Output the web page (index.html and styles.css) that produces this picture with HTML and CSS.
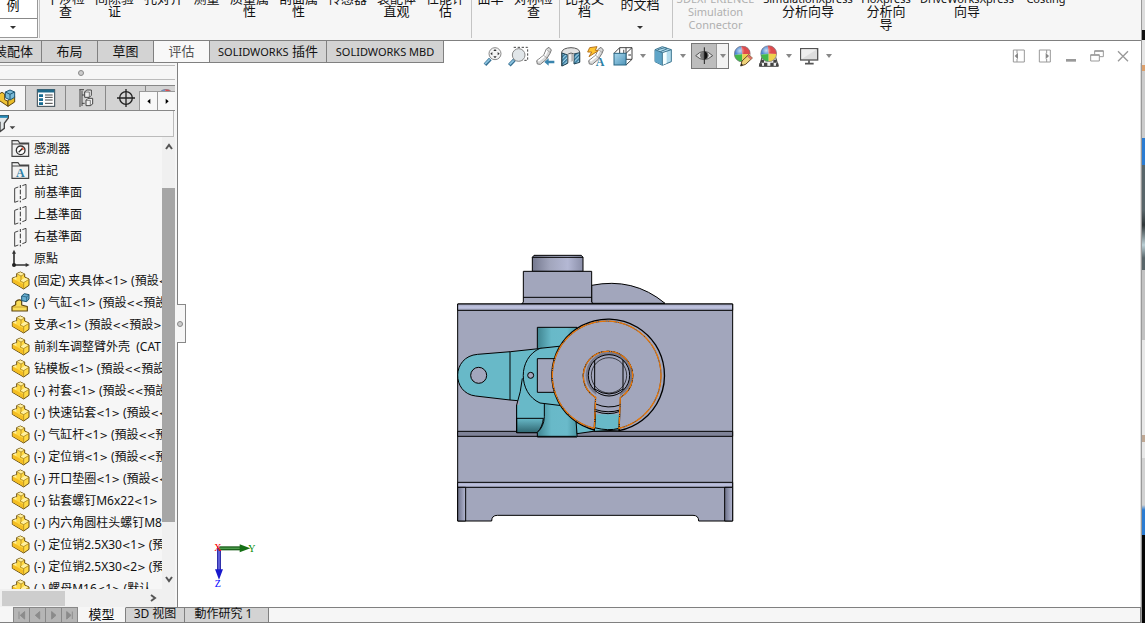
FILE: index.html
```html
<!DOCTYPE html>
<html lang="zh">
<head>
<meta charset="utf-8">
<title>SOLIDWORKS</title>
<link rel="stylesheet" href="styles.css">
</head>
<body>
<svg width="0" height="0" class="defs" aria-hidden="true">
  <defs>
    <linearGradient id="steel" x1="0" x2="1"><stop offset="0" stop-color="#74788e"/><stop offset=".35" stop-color="#a2a6bd"/><stop offset=".7" stop-color="#b4b8d4"/><stop offset="1" stop-color="#8a8ea8"/></linearGradient>
    <linearGradient id="edge" x1="0" x2="0" y1="0" y2="1"><stop offset="0" stop-color="#a0a4bc"/><stop offset=".5" stop-color="#c0c4e2"/><stop offset="1" stop-color="#a0a4bc"/></linearGradient>
    <linearGradient id="teal" x1="0" x2="1"><stop offset="0" stop-color="#3f8490"/><stop offset=".35" stop-color="#68b9c8"/><stop offset=".75" stop-color="#6abaca"/><stop offset="1" stop-color="#4a97a4"/></linearGradient>
    <linearGradient id="tealdown" x1="0" x2="0" y1="0" y2="1"><stop offset="0" stop-color="#68b9c8"/><stop offset="1" stop-color="#2f6670"/></linearGradient>
    <linearGradient id="foot" x1="0" x2="1"><stop offset="0" stop-color="#6c7088"/><stop offset="1" stop-color="#b4b8d2"/></linearGradient>
    <linearGradient id="metal" x1="0" y1="0" x2="1" y2="1"><stop offset="0" stop-color="#ffffff"></stop><stop offset="1" stop-color="#a4a4a4"></stop></linearGradient>
    <linearGradient id="blue" x1="0" y1="0" x2="1" y2="1"><stop offset="0" stop-color="#a8d8ee"></stop><stop offset="1" stop-color="#4f94b8"></stop></linearGradient>
    <radialGradient id="shine" cx=".35" cy=".3"><stop offset="0" stop-color="#fff" stop-opacity=".7"/><stop offset=".6" stop-color="#fff" stop-opacity="0"/></radialGradient>
    <pattern id="hatch" width="8" height="8" patternUnits="userSpaceOnUse" patternTransform="rotate(45)"><rect width="8" height="8" fill="#9ed0e6"/><path d="M2 0V8" stroke="#276c92" stroke-width="4"/></pattern>
    <symbol id="part" viewBox="0 0 60 60">
      <path d="M4 21L17 17V8L28 3L41 9V18L54 24V43L38 54L4 34Z" fill="#ffd943" stroke="#6b5013" stroke-width="3" stroke-linejoin="round"/>
      <path d="M5 23L17 29L29 36L37 40V52L5 33Z" fill="#f5be22"/>
      <path d="M17 9L28 4L40 9L30 15ZM28 29L41 20L53 25L38 34ZM5 22L16 18V27Z" fill="#fff0a0"/>
      <path d="M17 8L30 15V27L27 30L38 35L54 25M30 15L41 9M38 35V53" fill="none" stroke="#9a751b" stroke-width="2"/>
    </symbol>
    <symbol id="assembly" viewBox="0 0 60 60">
      <path d="M3 54V41L14 35V26Q25 16 32 24V36L49 41V54Z" fill="#f8dc59" stroke="#5d4510" stroke-width="3.5" stroke-linejoin="round"/>
      <path d="M4 42H48" stroke="#b78a1c" stroke-width="2"/>
      <path d="M32 9L40 2L54 5V18L47 26L32 23Z" fill="#65add0" stroke="#1c526e" stroke-width="3"/>
      <path d="M32 9L47 12V25M47 12L54 5" fill="none" stroke="#1c526e" stroke-width="2"/>
    </symbol>
    <symbol id="plane" viewBox="0 0 60 60">
      <path d="M22 12L11 16V58L22 54M34 50L45 46V4L34 8" fill="none" stroke="#444" stroke-width="3"/>
      <path d="M28 6V58" stroke="#333" stroke-width="3" stroke-dasharray="9 5 14 5"/>
    </symbol>
    <symbol id="folder" viewBox="0 0 60 60"><path d="M3 52V5H21L26 12H53V52ZM3 15H53" fill="#f1f1f1" stroke="#444" stroke-width="3.5"/></symbol>
    <symbol id="ball" viewBox="0 0 50 50">
      <circle cx="25" cy="25" r="24" fill="#e7eaf1"/>
      <path d="M25 25L22 1A24 24 0 0 0 1 28Z" fill="#4a87d2"/><path d="M25 25L22 1A24 24 0 0 1 49 26Z" fill="#df4b4d"/>
      <path d="M25 25L1 28A24 24 0 0 0 25 49Z" fill="#42b84b"/><path d="M25 25L25 49A24 24 0 0 0 49 26Z" fill="#eed04d"/>
      <circle cx="25" cy="25" r="24" fill="url(#shine)" stroke="#7c7580" stroke-width="2"/>
    </symbol>
    <symbol id="torch" viewBox="0 0 72 72">
      <path d="M11 50L32 34L40 15L48 10L55 18L51 28L40 46L22 61L13 60Z" fill="#d9d9d9" stroke="#777" stroke-width="3"/>
      <path d="M16 51L35 36L44 17" fill="none" stroke="#fff" stroke-width="5"/>
      <path d="M33 35L43 43M41 17L52 26" fill="none" stroke="#888" stroke-width="2"/>
    </symbol>
  </defs>
</svg>

<div class="app">
  <header class="ribbon">
    <button class="sample"><span>例</span><i class="caret"></i></button>
    <i class="rule"></i>
    <div class="group first">
      <button class="cmd w49">干涉检<br>查</button><button class="cmd w49">间隙验<br>证</button><button class="cmd w49">孔对齐</button><button class="cmd w37">测量</button><button class="cmd w49">质量属<br>性</button><button class="cmd w49">剖面属<br>性</button><button class="cmd w49">传感器</button><button class="cmd w49">装配体<br>直观</button><button class="cmd w49">性能评<br>估</button>
    </div>
    <i class="rule"></i>
    <div class="group"><button class="cmd w37">曲率</button><button class="cmd w49">对称检<br>查</button></div>
    <i class="rule"></i>
    <div class="group"><button class="cmd w49">比较文<br>档</button><button class="cmd low w62">检查激活<br>的文档<i class="caret"></i></button></div>
    <i class="rule"></i>
    <div class="group"><button class="cmd off w85" disabled>3DEXPERIENCE<br>Simulation<br>Connector</button><button class="cmd w100"><small>SimulationXpress</small><br>分析向导</button><button class="cmd w56"><small>FloXpress</small><br>分析向<br>导</button><button class="cmd w106"><small>DriveWorksXpress</small><br>向导</button><button class="cmd w52"><small>Costing</small></button></div>
  </header>

  <div class="strip">
    <nav class="tabs">
      <button class="tab first">装配体</button><button class="tab">布局</button><button class="tab">草图</button><button class="tab active">评估</button><button class="tab wide"><small>SOLIDWORKS</small> 插件</button><button class="tab wide"><small>SOLIDWORKS MBD</small></button>
    </nav>
    <div class="tools">
      <button class="tool" aria-label="整屏显示全图"><svg viewBox="0 0 72 72"><path d="M12 62L28 45" stroke="#356f92" stroke-width="11"/><path d="M12 60L26 46" stroke="#8fc6e2" stroke-width="5"/><circle cx="42" cy="29" r="18" fill="#f4f4f4" stroke="#888" stroke-width="3"/><path d="M42 15L47 21H37ZM42 43L37 37H47ZM28 29L34 24V34ZM56 29L50 24V34Z" fill="#333"/></svg></button>
      <button class="tool" aria-label="局部放大"><svg viewBox="0 0 72 72"><path d="M20 10H62V49H46" fill="none" stroke="#444" stroke-width="3" stroke-dasharray="7 5"/><path d="M7 64L22 48" stroke="#356f92" stroke-width="11"/><path d="M8 61L20 49" stroke="#8fc6e2" stroke-width="5"/><circle cx="35" cy="33" r="19" fill="#e1e6e9" stroke="#888" stroke-width="3"/></svg></button>
      <button class="tool" aria-label="上一视图"><svg viewBox="0 0 72 72"><use href="#torch"/><path d="M34 54L47 43V50H64V58H47V65Z" fill="#3a85ae"/></svg></button>
      <button class="tool" aria-label="剖面视图"><svg viewBox="0 0 72 72"><path d="M8 24Q12 12 36 11Q60 12 62 24V54L47 48V31L36 27L26 31V56L8 66Z" fill="#e2e2e2" stroke="#555" stroke-width="3"/><path d="M9 27L26 33V58L9 66ZM45 30L62 26V55L45 60Z" fill="url(#hatch)" stroke="#245" stroke-width="3"/><path d="M26 30H45V50L26 56Z" fill="#b5b5b5"/><path d="M30 31H37V53L30 55Z" fill="#eee"/></svg></button>
      <button class="tool" aria-label="动态注解视图"><svg viewBox="0 0 72 72"><use href="#torch"/><path d="M14 11L36 8L31 19L40 20L12 38L20 24L8 24Z" fill="#ffc52e" stroke="#b57320" stroke-width="3"/><text x="32" y="66" class="glyph-a" font-size="36">A</text></svg></button>
      <button class="tool" aria-label="视图定向"><svg viewBox="0 0 72 72"><path d="M9 28L26 11H63V46L45 63M45 28L63 11M26 11V28M45 46H63M45 11V46" fill="none" stroke="#444" stroke-width="3"/><path d="M38 17V27M52 33H60" stroke="#777" stroke-width="4"/><rect x="9" y="28" width="36" height="35" fill="url(#blue)" stroke="#286684" stroke-width="3"/></svg></button>
      <i class="drop"></i>
      <button class="tool" aria-label="显示样式"><svg viewBox="0 0 72 72"><path d="M12 17L34 8L61 17V53L34 64L12 53Z" fill="#b2dced" stroke="#3d7590" stroke-width="3"/><path d="M12 17L34 26V63L12 53Z" fill="#5fa5c8"/><path d="M34 26L47 21V58L34 63Z" fill="#f5ffff"/><path d="M12 17L34 26L61 17M34 26V63M20 17L42 11L49 14L28 23" fill="none" stroke="#3d7590" stroke-width="3"/></svg></button>
      <i class="drop"></i>
      <button class="eye" aria-label="隐藏/显示项目"><svg viewBox="0 0 72 72"><path d="M11 35Q36 9 62 35Q36 59 11 35Z" fill="#ddd" stroke="#555" stroke-width="3"/><circle cx="37" cy="34" r="13" fill="#777"/><path d="M37 22A13 13 0 0 1 37 47Z" fill="#111"/><path d="M37 10V60" stroke="#222" stroke-width="3"/></svg><span><i class="drop"></i></span></button>
      <button class="tool" aria-label="编辑外观"><svg viewBox="0 0 72 72"><use href="#ball" x="9" y="5" width="50" height="50"/><path d="M29 66L33 51L53 32L64 42L44 61Z" fill="#efd279" stroke="#634a24" stroke-width="3"/><path d="M53 32L64 42L59 47L48 37Z" fill="#d9736b"/><path d="M29 66L31 58L36 63Z" fill="#222"/></svg></button>
      <button class="tool" aria-label="应用布景"><svg viewBox="0 0 72 72"><path d="M17 33H54L64 67H7Z" fill="#eee" stroke="#444" stroke-width="3"/><path d="M12 47H21V56H12ZM49 47H59V56H49ZM21 56H31V66H21ZM40 56H50V66H40ZM7 58H15V66H7ZM57 58H64V66H57Z" fill="#444"/><use href="#ball" x="10" y="4" width="50" height="50"/></svg></button>
      <i class="drop"></i>
      <button class="tool" aria-label="视图设置"><svg viewBox="0 0 72 72"><rect x="11" y="14" width="51" height="34" fill="#ddd" stroke="#555" stroke-width="4"/><path d="M13 16H60L13 46Z" fill="#eee"/><path d="M36 49V58M24 59H50" stroke="#555" stroke-width="5"/></svg></button>
      <i class="drop"></i>
      <div class="windows">
        <button aria-label="左窗格"><svg viewBox="0 0 42 42"><path d="M4 3H37V39H4ZM15 3V13M15 30V39" fill="none" stroke="#999" stroke-width="3"/><path d="M18 11V31L8 21Z" fill="#888"/></svg></button>
        <button aria-label="右窗格"><svg viewBox="0 0 42 42"><path d="M4 3H37V39H4ZM26 3V13M26 30V39" fill="none" stroke="#999" stroke-width="3"/><path d="M23 11V31L33 21Z" fill="#888"/></svg></button>
        <button aria-label="最小化"><svg viewBox="0 0 42 42"><path d="M6 34H36" stroke="#999" stroke-width="8"/></svg></button>
        <button aria-label="还原"><svg viewBox="0 0 42 42"><path d="M2 17H28V36H2ZM2 19H28M14 17V5H40V23H28M14 7H40" fill="none" stroke="#999" stroke-width="3"/></svg></button>
        <button aria-label="关闭"><svg viewBox="0 0 42 42"><path d="M6 7L36 37M36 7L6 37" stroke="#999" stroke-width="4"/></svg></button>
      </div>
    </div>
  </div>

  <div class="work">
    <aside class="panel">
      <div class="grip"><i class="dot"></i></div>
      <div class="ptabs">
        <button class="ptab active" aria-label="设计树"><svg viewBox="6 0 60 60"><path d="M0 20L12 13L20 18V35L30 40V55L0 35Z" fill="#efc334" stroke="#5d4510" stroke-width="3"/><path d="M30 37L50 26V42L30 55Z" fill="#eabd27" stroke="#5d4510" stroke-width="3"/><path d="M22 12L36 6L50 12V28L36 36L22 29Z" fill="#79bad7" stroke="#1e5673" stroke-width="3"/><path d="M22 12L36 19L50 12M36 19V35" stroke="#1e5673" stroke-width="3" fill="none"/></svg></button>
        <button class="ptab" aria-label="属性"><svg viewBox="0 0 60 60"><rect x="4" y="5" width="52" height="50" fill="#fff" stroke="#34454e" stroke-width="3"/><path d="M5 9H55" stroke="#1f6a8b" stroke-width="9"/><path d="M9 23H21M9 35H21M9 47H21" stroke="#176b91" stroke-width="8"/><path d="M27 21H50M27 28H50M27 36H50M27 46H50" stroke="#444" stroke-width="3"/></svg></button>
        <button class="ptab" aria-label="配置"><svg viewBox="0 0 60 60"><path d="M10 5H24M12 5V57M18 8V54M18 21H26M18 46H26" fill="none" stroke="#444" stroke-width="3"/><path d="M26 12L32 6H46V22L40 28H26ZM30 37L36 31H50V48L43 53H30Z" fill="#eee" stroke="#444" stroke-width="3"/><path d="M26 12H40V28M30 37H43V53" fill="none" stroke="#444" stroke-width="2"/></svg></button>
        <button class="ptab" aria-label="尺寸"><svg viewBox="0 0 60 60"><circle cx="30" cy="30" r="19" fill="none" stroke="#222" stroke-width="4"/><path d="M30 3V57M3 30H57" stroke="#222" stroke-width="4"/></svg></button>
        <button class="ptab last" aria-label="外观"><svg viewBox="0 0 60 60"><use href="#ball" x="5" y="3" width="50" height="50"/></svg></button>
        <div class="pscroll"><button aria-label="向左"><svg viewBox="0 0 30 30"><path d="M19 8V24L10 16Z"/></svg></button><button aria-label="向右"><svg viewBox="0 0 30 30"><path d="M11 8V24L20 16Z"/></svg></button></div>
      </div>
      <div class="filter"><button aria-label="过滤"><svg viewBox="0 0 48 60"><path d="M-20 5H25V12L13 28V43L0 53V25L-18 10Z" fill="#e2e7e9" stroke="#444" stroke-width="4"/><path d="M-16 8H24" stroke="#2386b4" stroke-width="7"/><path d="M29 37H46L37 46Z" fill="#444"/></svg></button><input type="text" aria-label="过滤"></div>
      <div class="treebox">
        <ul class="tree">
          <li><svg viewBox="0 0 60 60"><use href="#folder"/><circle cx="29" cy="34" r="13" fill="#fff" stroke="#333" stroke-width="4"/><path d="M23 40L35 28" stroke="#222" stroke-width="4"/><path d="M32 23L40 31L34 34Z" fill="#df4a2a"/></svg><span>感測器</span></li>
          <li><svg viewBox="0 0 60 60"><use href="#folder"/><text x="15" y="47" class="glyph-a" font-size="36">A</text></svg><span>註記</span></li>
          <li><svg><use href="#plane"/></svg><span>前基準面</span></li>
          <li><svg><use href="#plane"/></svg><span>上基準面</span></li>
          <li><svg><use href="#plane"/></svg><span>右基準面</span></li>
          <li><svg viewBox="0 0 60 60"><path d="M9 10V48H46" fill="none" stroke="#333" stroke-width="5"/><path d="M9 2L15 14H3ZM56 48L44 42V54Z" fill="#333"/><circle cx="9" cy="48" r="6" fill="#222"/></svg><span>原點</span></li>
          <li><svg><use href="#part"/></svg><span>(固定) 夹具体<i>&lt;</i>1<i>&gt;</i> (預設<i>&lt;&lt;</i></span></li>
          <li><svg><use href="#assembly"/></svg><span>(-) 气缸<i>&lt;</i>1<i>&gt;</i> (預設<i>&lt;&lt;</i>預設</span></li>
          <li><svg><use href="#part"/></svg><span>支承<i>&lt;</i>1<i>&gt;</i> (預設<i>&lt;&lt;</i>預設<i>&gt;</i></span></li>
          <li><svg><use href="#part"/></svg><span>前刹车调整臂外壳&nbsp; (CAT</span></li>
          <li><svg><use href="#part"/></svg><span>钻模板<i>&lt;</i>1<i>&gt;</i> (預設<i>&lt;&lt;</i>預設</span></li>
          <li><svg><use href="#part"/></svg><span>(-) 衬套<i>&lt;</i>1<i>&gt;</i> (預設<i>&lt;&lt;</i>預設</span></li>
          <li><svg><use href="#part"/></svg><span>(-) 快速钻套<i>&lt;</i>1<i>&gt;</i> (預設<i>&lt;&lt;</i></span></li>
          <li><svg><use href="#part"/></svg><span>(-) 气缸杆<i>&lt;</i>1<i>&gt;</i> (預設<i>&lt;&lt;</i>預</span></li>
          <li><svg><use href="#part"/></svg><span>(-) 定位销<i>&lt;</i>1<i>&gt;</i> (預設<i>&lt;&lt;</i>預</span></li>
          <li><svg><use href="#part"/></svg><span>(-) 开口垫圈<i>&lt;</i>1<i>&gt;</i> (預設<i>&lt;&lt;</i></span></li>
          <li><svg><use href="#part"/></svg><span>(-) 钻套螺钉M6x22<i>&lt;</i>1<i>&gt;</i></span></li>
          <li><svg><use href="#part"/></svg><span>(-) 内六角圆柱头螺钉M8</span></li>
          <li><svg><use href="#part"/></svg><span>(-) 定位销2.5X30<i>&lt;</i>1<i>&gt;</i> (預</span></li>
          <li><svg><use href="#part"/></svg><span>(-) 定位销2.5X30<i>&lt;</i>2<i>&gt;</i> (預</span></li>
          <li><svg><use href="#part"/></svg><span>(-) 螺母M16<i>&lt;</i>1<i>&gt;</i> (默认</span></li>
        </ul>
        <div class="vbar"><svg viewBox="0 0 14 14"><path d="M4 9L7 5L10 9"/></svg><i class="space"></i><i class="thumb"></i><i class="rest"></i><svg viewBox="0 0 14 14"><path d="M4 5L7 9L10 5"/></svg></div>
      </div>
      <div class="hbar"><i class="thumb"></i><svg viewBox="0 0 14 14"><path d="M5 4L9 7L5 10"/></svg></div>
      <button class="collapse" aria-label="折叠面板"><i class="dot"></i></button>
    </aside>

    <main class="view">
      <svg class="model" viewBox="0 0 870 855" role="img" aria-label="夹具装配体">
        <g stroke="#000" stroke-width="3" fill="#a2a6bc" stroke-linejoin="round">
          <path d="M425 121Q550 96 645 175H425Z"/>
          <path d="M247 37L252 31H394L399 37V79H247Z" fill="url(#steel)"/><path d="M247 37H399"/>
          <path d="M220 79H425V171L430 177H215L220 171Z"/><path d="M220 157H425"/>
          <path d="M23 177H848V828H746Q746 811 729 811H142Q125 811 125 828H23Z"/>
          <path d="M23 177H848V196H23Z" fill="url(#edge)"/>
          <path d="M23 559H848V574H23Z" fill="#7f8398"/>
          <path d="M23 712H848V727H23Z" fill="url(#edge)"/>
          <path d="M23 727H47V828H23Z" fill="url(#foot)"/><path d="M824 727H848V828H824Z" fill="url(#foot)"/>
          <path d="M262 247H381V340H262Z" fill="url(#teal)"/>
          <path d="M275 310L182 320L83 328C4 334 4 445 77 453L180 465L208 467V560H275L335 470Z" fill="#68b9c8" stroke="none"/>
          <path d="M275 310L182 320L83 328C4 334 4 445 77 453L180 465L203 467" fill="none"/>
          <path d="M180 320V465M217 400Q213 440 200 480V563H264" fill="none"/>
          <path d="M200 480H283V525Q278 545 264 563H200Z" fill="#68b9c8" stroke="none"/>
          <path d="M200 520H280Q278 545 262 563H200Z" fill="url(#tealdown)"/><path d="M200 480V563" fill="none"/>
          <path d="M283 470H381V576H262V562Q282 545 283 515Z" fill="url(#teal)"/><path d="M262 574H379" fill="none"/>
          <path d="M375 490L480 552L430 559L381 566Z" fill="#68b9c8"/>
          <path d="M335 303L270 310C203 339 203 444 270 474L335 482Z" fill="#68b9c8"/>
          <path d="M330 341H262V442H330Z"/>
          <circle cx="86" cy="391" r="24"/><circle cx="242" cy="391" r="9"/>
          <path d="M437 500H510L509 555L433 559Z" fill="#68b9c8"/>
          <path fill-rule="evenodd" d="M433 555A169 169 0 1 1 507 557L511 457A74 74 0 1 0 437 457Z" stroke-width="4"/>
          <path d="M437 457A74 74 0 1 1 511 457V508H437Z" stroke="none"/>
          <circle cx="477" cy="391" r="70" fill="#77798b" stroke="none"/>
          <path d="M439 440H510V487Q475 501 437 487Z" stroke="none"/>
          <circle cx="477" cy="391" r="62"/>
          <circle cx="477" cy="391" r="53" fill="none" stroke-width="2"/><path d="M434 345V435M519 345V435M434 432Q478 462 519 432" fill="none"/>
          <path d="M437 477Q475 493 510 480M437 494Q475 506 510 495M437 499Q475 513 510 499M433 548Q476 559 507 550" fill="none"/>
        </g>
        <path d="M433 550A163 163 0 1 1 507 550L511 457A74 74 0 1 0 437 457L433 550" fill="none" stroke="#111" stroke-width="2"/>
        <path d="M433 550A163 163 0 1 1 507 550L511 457A74 74 0 1 0 437 457L433 550" fill="none" stroke="#e87708" stroke-width="4" stroke-dasharray="22 2 4 2"/>
      </svg>
      <svg class="triad" viewBox="0 0 126 150" role="img" aria-label="坐标轴"><path d="M24 20V91" stroke="#3030aa" stroke-width="12"/><path d="M24 20V91" stroke="#6868df" stroke-width="5"/><path d="M12 85H36L24 116Z" fill="#1919cc"/><path d="M25 22H89" stroke="#125812" stroke-width="12"/><path d="M25 22H88" stroke="#4c9c4c" stroke-width="5"/><path d="M86 10L118 22L86 34Z" fill="#157015"/><text x="10" y="31" fill="#f00">X</text><text x="112" y="32" fill="#080">Y</text><text x="11" y="139" fill="#00f">Z</text></svg>
    </main>
  </div>

  <footer class="foot">
    <div class="nav"><button aria-label="首个"><svg viewBox="0 0 48 42"><path d="M16 10V34M34 10V34L20 22Z"/></svg></button><button aria-label="上一个"><svg viewBox="0 0 48 42"><path d="M31 10V34L17 22Z"/></svg></button><button aria-label="下一个"><svg viewBox="0 0 48 42"><path d="M18 10V34L32 22Z"/></svg></button><button aria-label="末个"><svg viewBox="0 0 48 42"><path d="M33 10V34M15 10V34L29 22Z"/></svg></button></div>
    <button class="ftab on">模型</button><button class="ftab view3d">3D 视图</button><button class="ftab motion">動作研究 1</button>
    <div class="status"></div>
  </footer>
</div>
<div class="behind"></div>
</body>
</html>
```
FILE: styles.css
```css
* { box-sizing: border-box; }
body {
  margin: 0;
  display: flex;
  height: 100vh;
  overflow: hidden;
  background: #fff;
  color: #111;
  font: 12px/16px "Noto Sans", "Noto Sans CJK SC", sans-serif;
}
button { margin: 0; padding: 0; border: 0; background: none; color: inherit; font: inherit; }
small { font-size: 11px; }
svg { display: block; }
.defs { position: absolute; }
.app { flex: 1; min-width: 0; display: flex; flex-direction: column; }
.caret { display: block; width: 0; border: 3px solid transparent; border-top-color: #333; border-bottom: 0; }

.ribbon { display: flex; flex: none; height: 41px; overflow: hidden; background: #f6f6f6; border-bottom: 1px solid #808080; }
.sample { position: relative; display: flex; flex-direction: column; align-items: center; width: 38px; height: 38px; padding-right: 11px; background: #fff; border: solid #999; border-width: 0 1px 1px 0; font-size: 13px; line-height: 10px; }
.sample span { height: 18px; }
.sample .caret { margin-top: 8px; }
.sample::after { content: ""; position: absolute; left: 0; right: 0; top: 18px; border-top: 1px solid #888; }
.rule { width: 1px; height: 38px; margin-left: 1px; background: #c4c4c4; flex: none; }
.group { display: flex; align-items: flex-start; }
.group.first { padding-left: 1px; }
.cmd { margin-top: -8px; font-size: 13px; line-height: 13px; text-align: center; white-space: nowrap; flex: none; }
.cmd.low { margin-top: -15px; }
.cmd.low .caret { margin: 15px auto 0; }
.cmd.off { color: #b0b0b0; font-size: 11px; }
.w37 { width: 37px; } .w49 { width: 49px; } .w52 { width: 52px; } .w56 { width: 56px; }
.w62 { width: 62px; } .w85 { width: 85px; } .w100 { width: 100px; } .w106 { width: 106px; }

.strip { display: flex; align-items: flex-start; height: 22px; flex: none; }
.tabs { display: flex; flex: none; }
.tab { width: 56px; height: 22px; padding-bottom: 1px; font-size: 13px; line-height: 18px; background: #d3d3d3; border: solid #808080; border-width: 0 1px 1px 0; white-space: nowrap; }
.tab.first { width: 42px; padding-right: 8px; display: flex; align-items: center; justify-content: flex-end; }
.tab.active { background: #f8f8f8; color: #555; }
.tab.wide { width: 117px; }
.tools { flex: 1; display: flex; align-items: center; gap: 2px; height: 30px; padding-left: 37px; position: relative; z-index: 1; }
.tool { width: 24px; height: 24px; flex: none; }
.tool svg { width: 24px; height: 24px; }
.drop { width: 12px; height: 4px; flex: none; background: #888; clip-path: polygon(3px 0, 9px 0, 6px 4px); }
.eye { display: flex; align-items: center; width: 38px; height: 26px; background: #bdbdbd; border: 1px solid #777; flex: none; }
.eye svg { width: 24px; height: 24px; }
.eye span { display: flex; align-items: center; height: 24px; width: 12px; background: #f2f2f2; border-left: 1px solid #999; }
.windows { display: flex; gap: 12px; margin-left: auto; padding-right: 11px; }
.windows button, .windows svg { width: 14px; height: 14px; }
.glyph-a { font-family: "Liberation Serif", serif; font-weight: bold; fill: #2e7fa6; }

.work { flex: 1; min-height: 0; display: flex; }
.panel { position: relative; display: flex; flex-direction: column; width: 178px; flex: none; padding: 2px 2px 0 0; background: #f6f6f6; border-right: 1px solid #808080; }
.grip { height: 15px; display: grid; place-items: center; padding-right: 14px; border: solid #bbb; border-width: 1px 0; }
.dot { display: block; width: 6px; height: 6px; border: 1px solid #888; border-radius: 50%; background: #ccc; }
.ptabs { position: relative; display: flex; height: 26px; margin-top: 5px; overflow: hidden; flex: none; border: solid #888; border-width: 1px 0; }
.ptab { display: grid; place-items: center; width: 40px; background: #d3d3d3; border-right: 1px solid #888; flex: none; }
.ptab svg { width: 20px; height: 20px; }
.ptab.active { width: 26px; background: #f6f6f6; justify-items: start; }
.pscroll { position: absolute; right: 0; bottom: 0; display: flex; }
.pscroll button { display: grid; place-items: center; width: 18px; height: 19px; background: #f8f8f8; border: solid #999; border-width: 1px 0 0 1px; }
.pscroll svg { width: 10px; height: 10px; }
.filter { display: flex; height: 26px; margin-right: 1px; flex: none; border: solid #bbb; border-width: 0 1px 1px 0; }
.filter svg { width: 16px; height: 20px; }
.filter input { flex: 1; min-width: 0; border: 0; background: transparent; font: inherit; }
.treebox { display: flex; flex: 1; min-height: 0; }
.tree { flex: 1; min-width: 0; margin: 0; padding: 1px 0 0; overflow: hidden; list-style: none; font-family: "Noto Sans", "Noto Sans CJK TC", sans-serif; }
.tree li { display: flex; align-items: center; gap: 3px; height: 22px; padding-left: 11px; white-space: nowrap; }
.tree li svg { width: 20px; height: 20px; flex: none; }
.tree i { font: 10px "DejaVu Sans", sans-serif; }
.vbar { display: flex; flex-direction: column; align-items: center; width: 13px; padding: 3px 0; background: #f0f0f0; }
.vbar svg, .hbar svg { width: 14px; height: 14px; fill: none; stroke: #555; stroke-width: 2; }
.vbar i { width: 13px; }
.vbar .space { flex: 34; } .vbar .thumb { flex: 334; background: #a6a6a6; } .vbar .rest { flex: 50; }
.hbar { display: flex; align-items: center; justify-content: space-between; height: 18px; padding: 0 15px 0 2px; background: #f0f0f0; flex: none; }
.hbar .thumb { width: 63px; height: 15px; background: #cdcdcd; }
.collapse { position: absolute; right: -9px; top: 241px; width: 9px; height: 39px; background: #f6f6f6; border: 1px solid #888; border-left: 0; z-index: 1; }
.view { position: relative; flex: 1; min-width: 0; background: #fff; overflow: hidden; border-right: 1px solid #ddd; }
.model { position: absolute; left: 272px; top: 182px; width: 290px; height: 285px; }
.triad { position: absolute; left: 33px; top: 478px; width: 42px; height: 50px; overflow: visible; font: 30px "Liberation Serif", serif; }

.foot { display: flex; height: 16px; flex: none; padding-left: 13px; background: #f6f6f6; border-bottom: 1px solid #808080; font-size: 13px; line-height: 12px; }
.nav { display: flex; width: 65px; background: #b5b5b5; border: 1px solid #888; border-bottom: 0; }
.nav button { flex: 1; border-right: 1px solid #888; }
.nav svg { width: 15px; height: 14px; fill: #8b8b8b; stroke: #8b8b8b; stroke-width: 3; }
.ftab { padding-bottom: 3px; background: #d3d3d3; border: solid #808080; border-width: 1px 1px 0 0; white-space: nowrap; }
.ftab.on { width: 48px; background: #f6f6f6; border-top-color: transparent; }
.ftab.view3d { width: 59px; font-size: 12px; }
.ftab.motion { width: 84px; padding-right: 6px; font-family: "Noto Sans", "Noto Sans CJK TC", sans-serif; font-size: 12px; }
.status { flex: 1; border: solid #808080; border-width: 1px 1px 0 0; }
.behind {
  width: 4px;
  flex: none;
  border-left: 1px solid #999;
  background: linear-gradient(#ddd 0 30px, #111 30px 40px, #e6e6e6 40px 65px, #dca06c 65px 71px, #ccc 71px 138px, #2b7cd2 138px 165px, #59666a 165px 210px, #303738 225px, #bcd0d6 245px, #59666a 258px 270px, #c2c2c2 270px 340px, #e8e8e8 340px 435px, #bfa894 435px 442px, #e8e8e8 442px 458px, #d2d2d2 458px 505px, #2b7cd2 510px 535px, #050505 535px);
}
```
